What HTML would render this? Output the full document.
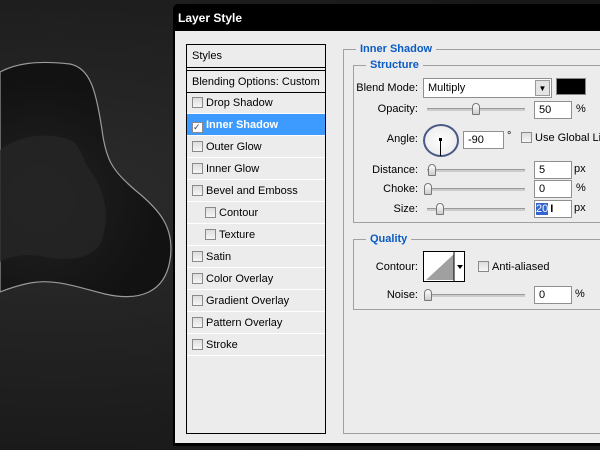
<!DOCTYPE html>
<html><head><style>
*{margin:0;padding:0;box-sizing:border-box}
body{width:600px;height:450px;overflow:hidden;position:relative;background:#1c1c1c;font-family:"Liberation Sans","DejaVu Sans",sans-serif;font-size:11px;color:#000;white-space:nowrap}
.a{position:absolute}
#bg{left:0;top:0;width:600px;height:450px;background:radial-gradient(ellipse at 60px 200px,#2c2c2c,#181818 80%)}
#dlg{left:173px;top:4px;width:440px;height:442px;background:#000;border-radius:5px 0 0 0}
#title{left:178px;top:11px;color:#fff;font-weight:bold;font-size:12px}
#body{left:175px;top:31px;width:430px;height:412px;background:#ececec}
#list{left:186px;top:44px;width:140px;height:390px;border:1px solid #000;background:#ececec;overflow:hidden}
.row{position:absolute;left:0;width:138px;height:22px;border-bottom:1px solid #fff;line-height:22px;padding-left:5px;overflow:hidden}
.cb{display:inline-block;width:11px;height:11px;border:1px solid #8a8a8a;background:linear-gradient(#ddd,#f6f6f6);vertical-align:-2px;margin-right:3px}
.sel{background:#3d9bff;color:#fff;font-weight:bold}
.grp{position:absolute;border:1px solid #a0a0a0;border-right:none}
.leg{position:absolute;background:#ececec;color:#0a5bc4;font-weight:bold;padding:0 4px}
.lbl{position:absolute;text-align:right;width:80px}
.inp{position:absolute;background:#fff;border:1px solid #8f8f8f;height:18px;padding-left:4px;line-height:17px}
.u{position:absolute}
.tr{position:absolute;height:3px;background:#ccc;border-top:1px solid #999}
.th{position:absolute;width:8px;height:12px;background:linear-gradient(#fff,#ccc);border:1px solid #777;border-radius:4px 4px 1px 1px}
</style></head><body>
<div class="a" id="bg"></div>
<svg class="a" style="left:0;top:0" width="180" height="450">
<defs><radialGradient id="g" cx="40" cy="200" r="120" gradientUnits="userSpaceOnUse"><stop offset="0" stop-color="#222"/><stop offset="1" stop-color="#121212"/></radialGradient></defs>
<path d="M0 72 C15 64 35 60 70 64 C90 68 96 90 102 130 C106 160 112 170 135 190 C160 210 175 228 170 260 C165 292 140 302 105 294 C80 288 55 278 30 283 C15 286 5 290 0 292 Z" fill="url(#g)" stroke="#9a9a9a" stroke-width="1.2"/>
<path d="M0 150 C15 138 45 130 70 140 C82 146 82 160 90 170 C105 190 110 215 102 240 C95 258 70 262 45 257 C25 253 10 256 0 262 Z" fill="#252525" opacity=".8"/>
</svg>
<div class="a" id="dlg"></div>
<div class="a" id="title">Layer Style</div>
<div class="a" id="body"></div>
<div class="a" id="list">
<div class="row" style="top:0;height:23px;border-bottom:1px solid #000">Styles</div>
<div class="row" style="top:25px;border-top:1px solid #000;height:23px;border-bottom:1px solid #000">Blending Options: Custom</div>
<div class="row" style="top:47px"><span class="cb"></span>Drop Shadow</div>
<div class="row sel" style="top:69px"><span class="cb" style="background:#fff;color:#336;font-size:9px;line-height:9px">✓</span>Inner Shadow</div>
<div class="row" style="top:91px"><span class="cb"></span>Outer Glow</div>
<div class="row" style="top:113px"><span class="cb"></span>Inner Glow</div>
<div class="row" style="top:135px"><span class="cb"></span>Bevel and Emboss</div>
<div class="row" style="top:157px;padding-left:18px"><span class="cb"></span>Contour</div>
<div class="row" style="top:179px;padding-left:18px"><span class="cb"></span>Texture</div>
<div class="row" style="top:201px"><span class="cb"></span>Satin</div>
<div class="row" style="top:223px"><span class="cb"></span>Color Overlay</div>
<div class="row" style="top:245px"><span class="cb"></span>Gradient Overlay</div>
<div class="row" style="top:267px"><span class="cb"></span>Pattern Overlay</div>
<div class="row" style="top:289px"><span class="cb"></span>Stroke</div>
</div>
<div class="grp" style="left:343px;top:49px;width:260px;height:385px"></div>
<div class="leg" style="left:356px;top:43px">Inner Shadow</div>
<div class="grp" style="left:353px;top:65px;width:250px;height:158px"></div>
<div class="leg" style="left:366px;top:59px">Structure</div>
<div class="lbl" style="left:338px;top:82px">Blend Mode:</div>
<div class="inp" style="left:423px;top:78px;width:129px;height:20px;line-height:19px">Multiply</div>
<div class="a" style="left:535px;top:80px;width:15px;height:16px;background:#e4e4e4;border:1px solid #999;font-size:8px;text-align:center;line-height:15px">▼</div>
<div class="a" style="left:556px;top:78px;width:30px;height:17px;background:#000;border:1px solid #888"></div>
<div class="lbl" style="left:338px;top:103px">Opacity:</div>
<div class="tr" style="left:427px;top:108px;width:98px"></div><div class="th" style="left:472px;top:103px"></div>
<div class="inp" style="left:534px;top:101px;width:38px">50</div><div class="u" style="left:576px;top:103px">%</div>
<div class="lbl" style="left:338px;top:133px">Angle:</div>
<div class="a" style="left:423px;top:124px;width:36px;height:33px;border-radius:50%;border:2px solid #4a5a86;background:radial-gradient(#fff,#e6e6e6)"></div>
<div class="a" style="left:440px;top:140px;width:1px;height:16px;background:#000"></div>
<div class="a" style="left:439px;top:138px;width:3px;height:3px;background:#000"></div>
<div class="inp" style="left:463px;top:131px;width:41px">-90</div><div class="u" style="left:507px;top:130px">°</div>
<div class="a" style="left:521px;top:132px"><span class="cb"></span>Use Global Light</div>
<div class="lbl" style="left:338px;top:164px">Distance:</div>
<div class="tr" style="left:427px;top:169px;width:98px"></div><div class="th" style="left:428px;top:164px"></div>
<div class="inp" style="left:534px;top:161px;width:38px">5</div><div class="u" style="left:574px;top:163px">px</div>
<div class="lbl" style="left:338px;top:183px">Choke:</div>
<div class="tr" style="left:427px;top:188px;width:98px"></div><div class="th" style="left:424px;top:183px"></div>
<div class="inp" style="left:534px;top:180px;width:38px">0</div><div class="u" style="left:576px;top:182px">%</div>
<div class="lbl" style="left:338px;top:203px">Size:</div>
<div class="tr" style="left:427px;top:208px;width:98px"></div><div class="th" style="left:436px;top:203px"></div>
<div class="inp" style="left:534px;top:200px;width:38px;padding-left:0"><span style="background:#3366cc;color:#fff;margin-left:1px">20</span><span style="font-weight:bold;margin-left:2px">I</span></div><div class="u" style="left:574px;top:202px">px</div>
<div class="grp" style="left:353px;top:239px;width:250px;height:71px"></div>
<div class="leg" style="left:366px;top:233px">Quality</div>
<div class="lbl" style="left:338px;top:261px">Contour:</div>
<div class="a" style="left:423px;top:251px;width:42px;height:31px;border:1px solid #000;background:#fff">
<svg width="40" height="29" style="position:absolute;left:0;top:0"><polygon points="2,28 30,2 30,28" fill="#a0a0a0"/><line x1="30" y1="0" x2="30" y2="29" stroke="#000"/><polygon points="33,13 39,13 36,17" fill="#000"/></svg></div>
<div class="a" style="left:478px;top:261px"><span class="cb"></span>Anti-aliased</div>
<div class="lbl" style="left:338px;top:289px">Noise:</div>
<div class="tr" style="left:427px;top:294px;width:98px"></div><div class="th" style="left:424px;top:289px"></div>
<div class="inp" style="left:534px;top:286px;width:38px">0</div><div class="u" style="left:575px;top:288px">%</div>
</body></html>
